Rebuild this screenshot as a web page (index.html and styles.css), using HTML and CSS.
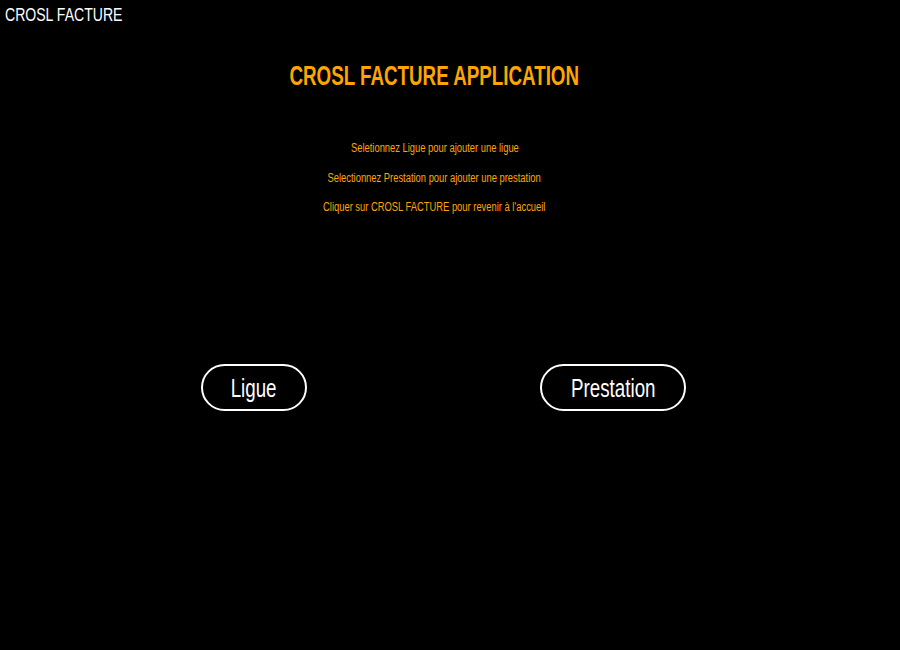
FILE: index.html
```html
<!DOCTYPE html>
<html lang="fr">
<head>
<meta charset="utf-8">
<title>CROSL FACTURE</title>
<link rel="stylesheet" href="styles.css">
</head>
<body>
<header class="topbar"><a class="brand" href="#"><span class="narrow narrow-left">CROSL FACTURE</span></a></header>
<main class="main">
  <h1 class="title"><span class="narrow narrow-title">CROSL FACTURE APPLICATION</span></h1>
  <div class="help">
    <p><span class="narrow">Seletionnez Ligue pour ajouter une ligue</span></p>
    <p><span class="narrow">Selectionnez Prestation pour ajouter une prestation</span></p>
    <p><span class="narrow">Cliquer sur CROSL FACTURE pour revenir à l'accueil</span></p>
  </div>
  <div class="actions">
    <button class="btn btn-ligue"><span class="narrow">Ligue</span></button>
    <button class="btn btn-prest"><span class="narrow">Prestation</span></button>
  </div>
</main>
</body>
</html>
```
FILE: styles.css
```css
html, body {
  margin: 0;
  padding: 0;
  background: #000;
  height: 100%;
}
body {
  font-family: "Liberation Sans", Arial, sans-serif;
  color: #fff;
}
.narrow {
  display: inline-block;
  transform: scaleX(0.75);
  transform-origin: center;
  white-space: nowrap;
}
.narrow-left {
  transform: scaleX(0.74);
  transform-origin: left center;
}
.narrow-title {
  transform: scaleX(0.695);
}
.topbar {
  padding: 4px 0 0 5px;
  height: 26px;
}
.brand {
  color: #fff;
  text-decoration: none;
  font-size: 19px;
  line-height: 22px;
}
.main {
  width: 869px;
  display: flex;
  flex-direction: column;
  align-items: center;
}
.title {
  color: #ffa500;
  font-size: 27px;
  font-weight: bold;
  margin: 29px 0 0;
  line-height: 34px;
}
.help {
  margin-top: 41px;
  text-align: center;
  color: #ffa500;
  font-size: 12.5px;
}
.help p {
  margin: 0;
  line-height: 29.5px;
}
.actions {
  margin-top: 141px;
  display: flex;
  gap: 233px;
  padding-left: 18px;
}
.btn {
  font-family: inherit;
  background: #000;
  color: #fff;
  border: 2px solid #fff;
  border-radius: 24px;
  height: 47px;
  font-size: 25px;
  padding: 2px 0 0;
  cursor: pointer;
}
.btn-ligue { width: 106px; }
.btn-prest { width: 146px; }
```
